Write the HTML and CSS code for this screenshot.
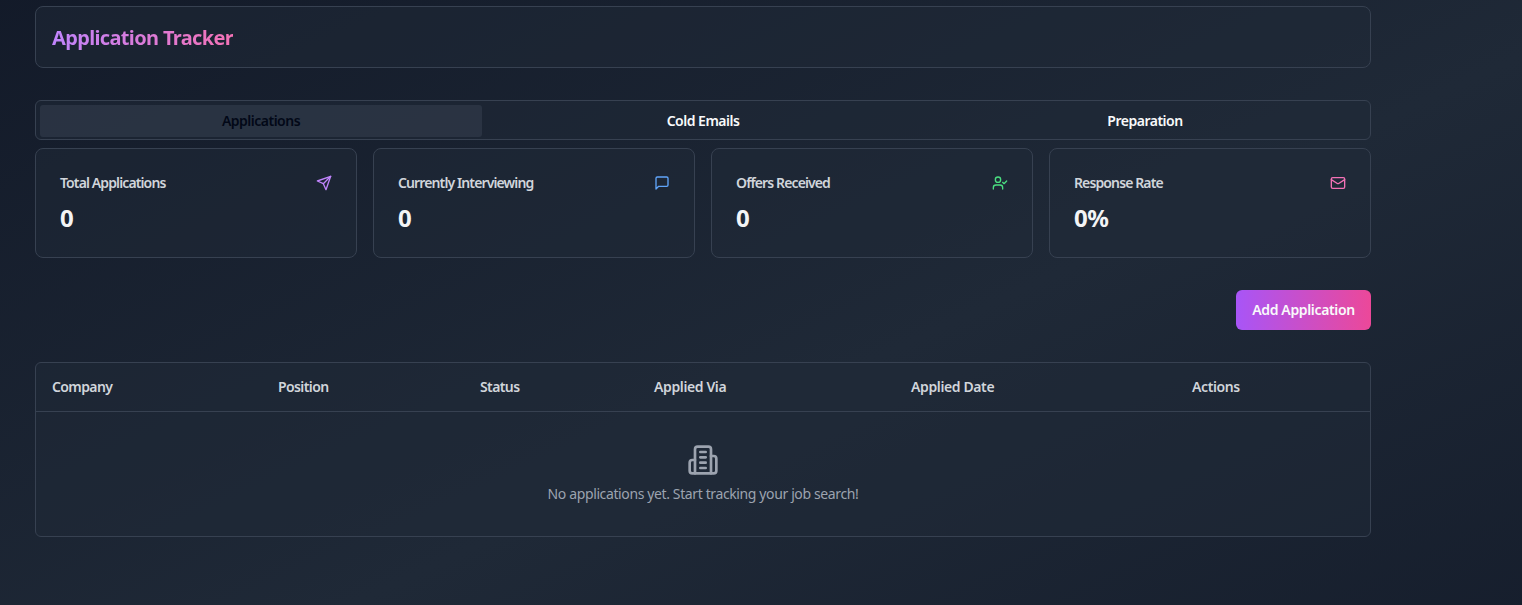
FILE: index.html
```html
<!DOCTYPE html>
<html lang="en">
<head>
<meta charset="utf-8">
<title>Application Tracker</title>
<link rel="stylesheet" href="styles.css">
</head>
<body>
<main class="page">
  <header class="panel title-bar"><h1 class="title">Application Tracker</h1></header>

  <nav class="panel tabs">
    <button class="tab tab-active">Applications</button>
    <button class="tab">Cold Emails</button>
    <button class="tab">Preparation</button>
  </nav>

  <section class="stats">
    <article class="panel stat">
      <div class="stat-head"><h3 class="label">Total Applications</h3>
        <svg class="icon purple" viewBox="0 0 24 24"><path d="m22 2-7 20-4-9-9-4Z"/><path d="M22 2 11 13"/></svg></div>
      <div class="value">0</div>
    </article>
    <article class="panel stat">
      <div class="stat-head"><h3 class="label">Currently Interviewing</h3>
        <svg class="icon blue" viewBox="0 0 24 24"><path d="M21 15a2 2 0 0 1-2 2H7l-4 4V5a2 2 0 0 1 2-2h14a2 2 0 0 1 2 2z"/></svg></div>
      <div class="value">0</div>
    </article>
    <article class="panel stat">
      <div class="stat-head"><h3 class="label">Offers Received</h3>
        <svg class="icon green" viewBox="0 0 24 24"><path d="M16 21v-2a4 4 0 0 0-4-4H6a4 4 0 0 0-4 4v2"/><circle cx="9" cy="7" r="4"/><path d="m16 11 2 2 4-4"/></svg></div>
      <div class="value">0</div>
    </article>
    <article class="panel stat">
      <div class="stat-head"><h3 class="label">Response Rate</h3>
        <svg class="icon pink" viewBox="0 0 24 24"><rect width="20" height="16" x="2" y="4" rx="2"/><path d="m22 7-8.97 5.7a1.94 1.94 0 0 1-2.06 0L2 7"/></svg></div>
      <div class="value">0%</div>
    </article>
  </section>

  <div class="actions"><button class="add">Add Application</button></div>

  <section class="panel table">
    <div class="table-head">
      <span>Company</span><span>Position</span><span>Status</span><span class="wide">Applied Via</span><span class="wide">Applied Date</span><span class="wide">Actions</span>
    </div>
    <div class="empty">
      <svg class="icon building" viewBox="0 0 24 24"><path d="M6 22V4a2 2 0 0 1 2-2h8a2 2 0 0 1 2 2v18Z"/><path d="M6 12H4a2 2 0 0 0-2 2v6a2 2 0 0 0 2 2h2"/><path d="M18 9h2a2 2 0 0 1 2 2v9a2 2 0 0 1-2 2h-2"/><path d="M10 6h4"/><path d="M10 10h4"/><path d="M10 14h4"/><path d="M10 18h4"/></svg>
      <p class="empty-text">No applications yet. Start tracking your job search!</p>
    </div>
  </section>
</main>
</body>
</html>
```
FILE: styles.css
```css
* { box-sizing: border-box; margin: 0; padding: 0; }
body {
  height: 605px;
  overflow: hidden;
  background: linear-gradient(to bottom right, #111827, #1f2937, #111827) -200px -28px / 1900px 891px no-repeat;
  font-family: "Noto Sans", "Open Sans", sans-serif;
  font-size: 14px;
  line-height: 20px;
  color: #f9fafb;
}
button { border: 0; background: none; font: inherit; color: inherit; }
.page { width: 1336px; margin-left: 35px; padding-top: 6px; }
.panel { background: rgba(31, 41, 55, 0.5); border: 1px solid #374151; border-radius: 8px; }

.title-bar { padding: 16px; height: 62px; margin-bottom: 32px; }
.title {
  width: max-content;
  font-size: 20px;
  line-height: 30px;
  font-weight: 700;
  letter-spacing: -0.65px;
  background: linear-gradient(to right, #c084fc, #f472b6);
  -webkit-background-clip: text;
  background-clip: text;
  color: transparent;
}

.tabs { display: grid; grid-template-columns: repeat(3, 1fr); height: 40px; padding: 4px; border-radius: 6px; margin-bottom: 8px; }
.tab { height: 32px; border-radius: 3px; font-weight: 600; letter-spacing: -0.5px; }
.tab-active { background: rgba(55, 65, 81, 0.5); color: #020817; }

.stats { display: grid; grid-template-columns: repeat(4, 1fr); gap: 16px; margin-bottom: 32px; }
.stat { height: 110px; padding: 24px; }
.stat-head { display: flex; align-items: center; justify-content: space-between; margin-bottom: 8px; }
.label { font-size: 14px; font-weight: 600; letter-spacing: -0.88px; color: #d1d5db; }
.value { font-size: 24px; line-height: 34px; font-weight: 700; letter-spacing: -0.6px; color: #f3f4f6; }

.icon { width: 16px; height: 16px; fill: none; stroke: currentColor; stroke-width: 2; stroke-linecap: round; stroke-linejoin: round; }
.purple { color: #c084fc; }
.blue { color: #60a5fa; }
.green { color: #4ade80; }
.pink { color: #f472b6; }

.actions { display: flex; justify-content: flex-end; margin-bottom: 32px; }
.add { width: 135px; height: 40px; border-radius: 6px; background: linear-gradient(to right, #a855f7, #ec4899); font-weight: 600; letter-spacing: -0.35px; white-space: nowrap; }

.table { height: 175px; border-radius: 6px; }
.table-head {
  display: grid;
  grid-template-columns: 226px 202px 174px 257px 281px 1fr;
  align-items: center;
  height: 49px;
  border-bottom: 1px solid #374151;
  font-weight: 600;
  letter-spacing: -0.6px;
  color: #d1d5db;
}
.table-head span { padding-left: 16px; }
.table-head .wide { letter-spacing: -0.38px; }
.empty { display: flex; flex-direction: column; align-items: center; gap: 8px; padding: 32px; color: #9ca3af; }
.building { width: 32px; height: 32px; }
.empty-text { letter-spacing: -0.38px; }
```
